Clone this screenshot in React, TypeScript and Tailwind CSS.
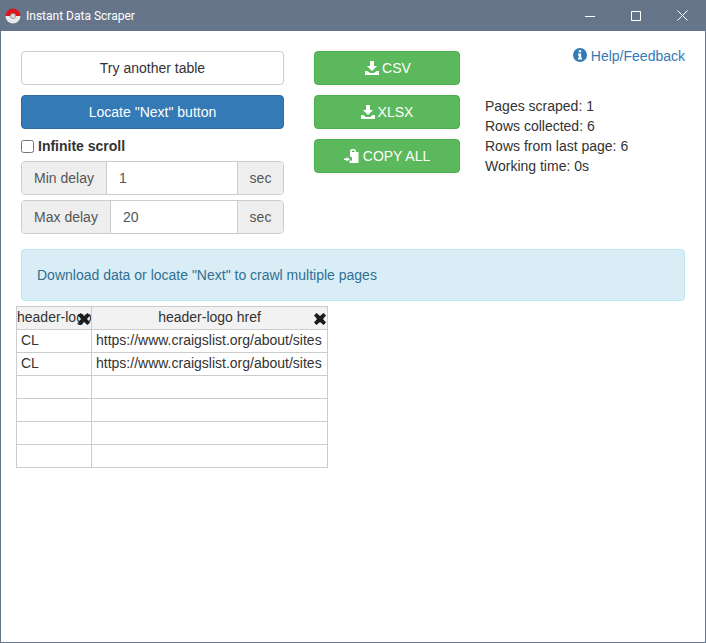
const rows = [
  ["CL", "https://www.craigslist.org/about/sites"],
  ["CL", "https://www.craigslist.org/about/sites"],
  ["", ""],
  ["", ""],
  ["", ""],
  ["", ""],
];

function PokeBall() {
  return (
    <svg width="16" height="16" viewBox="0 0 16 16" className="shrink-0">
      <path d="M0.5 8a7.5 7.5 0 0 1 15 0z" fill="#e0141c" />
      <path d="M0.5 8a7.5 7.5 0 0 0 15 0z" fill="#e8e8ea" />
      <circle cx="8" cy="8" r="2.6" fill="#d9d9dc" stroke="#8f8f96" strokeWidth="0.8" />
    </svg>
  );
}

function DownloadIcon() {
  return (
    <svg width="14" height="14" viewBox="0 0 14 14" fill="currentColor" className="shrink-0">
      <path d="M5 0h4v5h3L7 10 2 5h3z" />
      <path d="M0 10h2.5L5 12h4l2.500-2H14v4H0z" />
    </svg>
  );
}

function CopyIcon() {
  return (
    <svg width="15" height="14" viewBox="0 0 15 14" fill="currentColor" className="shrink-0">
      <path fillRule="evenodd" d="M6 3V1.500L7.500 0h3L12 1.500V3h2.500v11H5.500v-2.500H8V8H6V3zM8 1.500v1.500h2.500V1.500z" />
      <path d="M0 9.500h2.500V8L6 10.300 2.500 12.500V11H0z" />
    </svg>
  );
}

function RemoveIcon() {
  return (
    <svg width="12" height="12" viewBox="0 0 12 12" fill="#1c1c1c" className="absolute top-[6px] right-[1px]">
      <path d="M2.500 0 6 3 9.500 0 12 2.500 9 6 12 9.500 9.500 12 6 9 2.500 12 0 9.500 3 6 0 2.500z" />
    </svg>
  );
}

function DelayGroup({ label, value, labelWidth }: { label: string; value: string; labelWidth: string }) {
  return (
    <div className="flex h-[34px] rounded border border-[#ccc] overflow-hidden">
      <span className={`${labelWidth} flex items-center justify-center bg-[#eee] border-r border-[#ccc] text-[#555]`}>{label}</span>
      <span className="flex-1 flex items-center pl-3 text-[#555]">{value}</span>
      <span className="w-[46px] flex items-center justify-center bg-[#eee] border-l border-[#ccc] text-[#555]">sec</span>
    </div>
  );
}

export default function App() {
  return (
    <div className="w-[706px] h-[643px] bg-white border-x border-b border-[#66758a] flex flex-col text-[14px] leading-5 text-[#333] font-['Liberation_Sans',Arial,sans-serif]">
      <div className="h-[31px] -mx-px bg-[#66758a] flex items-center pl-[5px] text-white shrink-0">
        <PokeBall />
        <span className="ml-[5px] text-[12px] font-['Roboto',sans-serif]">Instant Data Scraper</span>
        <div className="ml-auto flex items-center gap-[36px] pr-[18px]">
          <svg width="10" height="10" viewBox="0 0 10 10" stroke="white" fill="none"><path d="M0 5.500h10" /></svg>
          <svg width="10" height="10" viewBox="0 0 10 10" stroke="white" fill="none"><path d="M.5.500h9v9h-9z" /></svg>
          <svg width="11" height="11" viewBox="0 0 11 11" stroke="white" fill="none"><path d="M.5.500l10 10M10.500.500l-10 10" /></svg>
        </div>
      </div>

      <div className="flex pt-5 pl-5">
        <div className="w-[263px] flex flex-col">
          <button className="h-[34px] rounded border border-[#ccc] bg-white text-[#333]">Try another table</button>
          <button className="h-[34px] mt-[10px] rounded border border-[#2e6da4] bg-[#337ab7] text-white">Locate "Next" button</button>
          <label className="flex items-center h-[20px] mt-[7px] font-bold">
            <input type="checkbox" className="w-[13px] h-[13px] ml-0 mr-[4px]" />
            Infinite scroll
          </label>
          <div className="mt-[5px] flex flex-col gap-[5px]">
            <DelayGroup label="Min delay" value="1" labelWidth="w-[85px]" />
            <DelayGroup label="Max delay" value="20" labelWidth="w-[89px]" />
          </div>
        </div>

        <div className="w-[146px] ml-[30px] flex flex-col gap-[10px]">
          <button className="h-[34px] pl-[2px] rounded border border-[#4cae4c] bg-[#5cb85c] text-white flex items-center justify-center gap-[3px]"><DownloadIcon />CSV</button>
          <button className="h-[34px] rounded border border-[#4cae4c] bg-[#5cb85c] text-white flex items-center justify-center gap-[3px]"><DownloadIcon />XLSX</button>
          <button className="h-[34px] rounded border border-[#4cae4c] bg-[#5cb85c] text-white flex items-center justify-center gap-[4px]"><CopyIcon />COPY ALL</button>
        </div>

        <div className="ml-[25px] w-[200px] flex flex-col">
          <a className="self-end h-[20px] mt-[-5px] flex items-center gap-[4px] text-[#337ab7]">
            <svg width="14" height="14" viewBox="0 0 14 14" className="shrink-0 -mt-[2px]">
              <circle cx="7" cy="7" r="7" fill="#337ab7" />
              <path d="M5.800 2.200h2.400v2H5.800zM5 5.500h3.200v4.200H9v1.900H5V9.700h.9V7.400H5z" fill="white" />
            </svg>
            Help/Feedback
          </a>
          <div className="mt-[30px]">
            <div>Pages scraped: 1</div>
            <div>Rows collected: 6</div>
            <div>Rows from last page: 6</div>
            <div>Working time: 0s</div>
          </div>
        </div>
      </div>

      <div className="mt-[15px] ml-5 mr-5 h-[52px] flex items-center px-[15px] rounded border border-[#bce8f1] bg-[#d9edf7] text-[#31708f]">
        Download data or locate "Next" to crawl multiple pages
      </div>

      <table className="mt-[5px] ml-[15px] w-[312px] table-fixed border-collapse">
        <colgroup>
          <col className="w-[75px]" />
          <col className="w-[236px]" />
        </colgroup>
        <thead>
          <tr className="h-[23px] bg-[#f2f2f2]">
            <th className="relative border border-[#ccc] font-normal whitespace-nowrap overflow-hidden pt-0 pb-[2px] px-0 text-center">
              header-logo
              <RemoveIcon />
            </th>
            <th className="relative border border-[#ccc] font-normal whitespace-nowrap pt-0 pb-[2px] px-0 text-center">
              header-logo href
              <RemoveIcon />
            </th>
          </tr>
        </thead>
        <tbody>
          {rows.map((row, i) => (
            <tr key={i} className="h-[23px]">
              <td className="border border-[#ccc] pt-0 pb-[2px] pl-1 pr-0 leading-5">{row[0]}</td>
              <td className="border border-[#ccc] pt-0 pb-[2px] pl-1 pr-0 leading-5 whitespace-nowrap">{row[1]}</td>
            </tr>
          ))}
        </tbody>
      </table>
    </div>
  );
}
